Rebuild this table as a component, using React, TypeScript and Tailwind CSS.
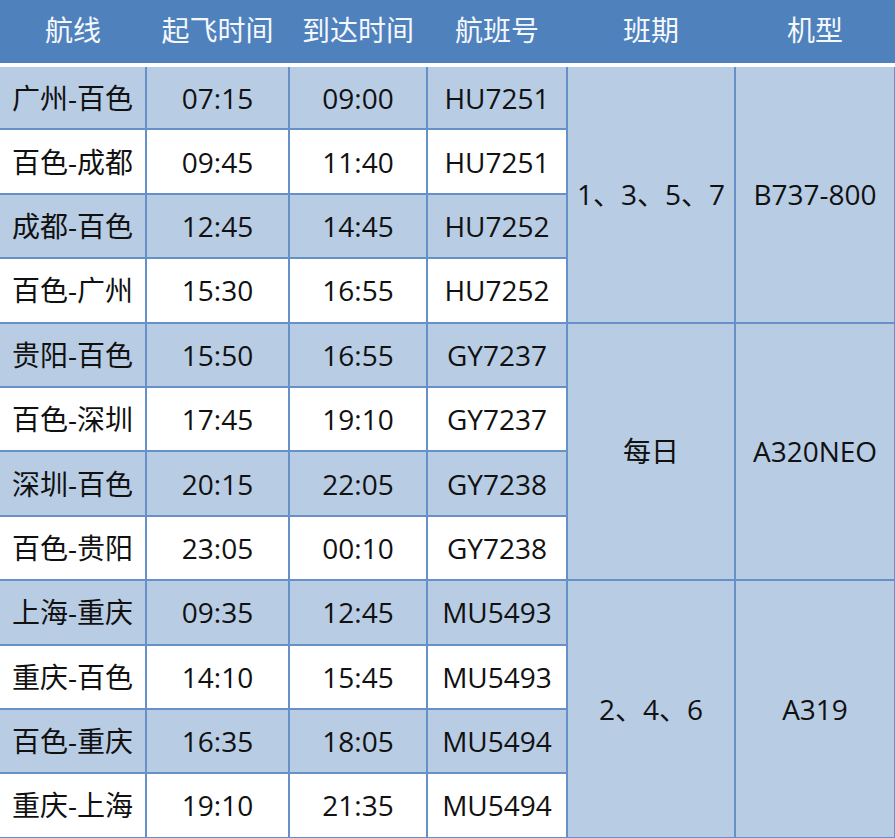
const groups = [
  {
    days: "1、3、5、7",
    plane: "B737-800",
    rows: [
      ["广州-百色", "07:15", "09:00", "HU7251"],
      ["百色-成都", "09:45", "11:40", "HU7251"],
      ["成都-百色", "12:45", "14:45", "HU7252"],
      ["百色-广州", "15:30", "16:55", "HU7252"],
    ],
  },
  {
    days: "每日",
    plane: "A320NEO",
    rows: [
      ["贵阳-百色", "15:50", "16:55", "GY7237"],
      ["百色-深圳", "17:45", "19:10", "GY7237"],
      ["深圳-百色", "20:15", "22:05", "GY7238"],
      ["百色-贵阳", "23:05", "00:10", "GY7238"],
    ],
  },
  {
    days: "2、4、6",
    plane: "A319",
    rows: [
      ["上海-重庆", "09:35", "12:45", "MU5493"],
      ["重庆-百色", "14:10", "15:45", "MU5493"],
      ["百色-重庆", "16:35", "18:05", "MU5494"],
      ["重庆-上海", "19:10", "21:35", "MU5494"],
    ],
  },
];

const headers = ["航线", "起飞时间", "到达时间", "航班号", "班期", "机型"];
const widths = ["w-[146px]", "w-[143px]", "w-[138px]", "w-[140px]", "w-[168px]", "w-[160px]"];

export default function App() {
  return (
    <div className="w-[895px] h-[838px] overflow-hidden bg-white font-['Open_Sans','Noto_Sans_CJK_SC',sans-serif] text-[28px] text-[#111]">
      <table className="w-[895px] table-fixed border-collapse">
        <colgroup>
          {widths.map((w, i) => (
            <col key={i} className={w} />
          ))}
        </colgroup>
        <thead>
          <tr className="h-[65px]">
            {headers.map((h) => (
              <th
                key={h}
                className="bg-[#4f81bd] border-b-4 border-white p-0 text-center align-middle font-normal text-[28px] text-[#f4f8fc] leading-none"
              >
                <div className="-mt-[3px]">{h}</div>
              </th>
            ))}
          </tr>
        </thead>
        <tbody>
          {groups.map((g) =>
            g.rows.map((r, i) => {
              const bg = i % 2 === 0 ? "bg-[#b8cce4]" : "bg-white";
              return (
                <tr key={r[0] + r[1]} className="h-[64.4px]">
                  {r.map((c, j) => (
                    <td
                      key={j}
                      className={`${bg} border-2 border-[#6690c8] p-0 text-center align-middle leading-none ${j === 0 ? "border-l-0" : ""}`}
                    >
                      {c}
                    </td>
                  ))}
                  {i === 0 && (
                    <>
                      <td
                        rowSpan={4}
                        className="bg-[#b8cce4] border-2 border-[#6690c8] p-0 text-center align-middle leading-none"
                      >
                        {g.days}
                      </td>
                      <td
                        rowSpan={4}
                        className="bg-[#b8cce4] border-2 border-[#6690c8] p-0 text-center align-middle leading-none"
                      >
                        {g.plane}
                      </td>
                    </>
                  )}
                </tr>
              );
            })
          )}
        </tbody>
      </table>
    </div>
  );
}
